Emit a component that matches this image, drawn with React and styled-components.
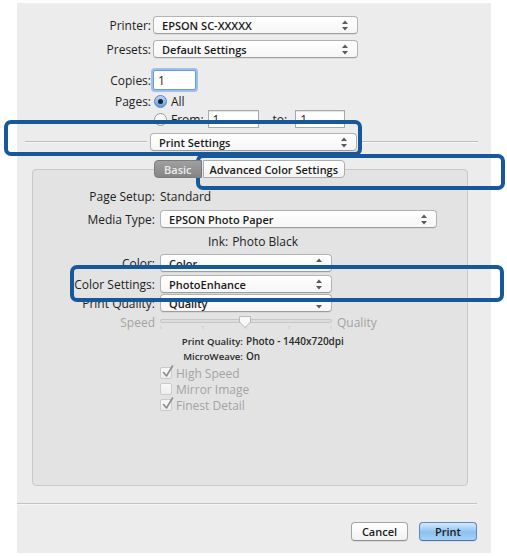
import React from "react";
import styled, { createGlobalStyle } from "styled-components";

const Global = createGlobalStyle`
  html, body { margin: 0; padding: 0; background: #ffffff; }
  body { font-family: "Open Sans", "DejaVu Sans", sans-serif; color: #1c1c1c; }
  * { box-sizing: border-box; }
`;

const Stage = styled.div`
  position: relative;
  width: 507px;
  height: 556px;
  background: #ffffff;
  overflow: hidden;
`;

const Dialog = styled.div`
  margin: 3px 0 0 17px;
  width: 474px;
  height: 550px;
  background: #ececec;
  display: flex;
  flex-direction: column;
`;

const FieldRow = styled.div`
  display: grid;
  grid-template-columns: ${(p) => p.$label}px auto;
  column-gap: ${(p) => p.$gap}px;
  align-items: center;
  height: ${(p) => p.$h}px;
  margin-top: ${(p) => p.$mt}px;
`;

const Label = styled.span`
  justify-self: end;
  white-space: nowrap;
  font-size: 12px;
  color: ${(p) => (p.$disabled ? "#a3a3a3" : "#1e1e1e")};
`;

const Value = styled.span`
  font-size: 12px;
  white-space: nowrap;
  color: #1e1e1e;
`;

const PopupBox = styled.div`
  width: ${(p) => p.$w}px;
  height: 18px;
  border: 1px solid #b3b3b3;
  border-bottom-color: #9d9d9d;
  border-radius: 4px;
  background: linear-gradient(#ffffff, #f6f6f6);
  box-shadow: 0 1px 1px rgba(0, 0, 0, 0.06);
  display: flex;
  align-items: center;
  justify-content: space-between;
  padding: 0 9px 0 8px;
  font-size: 11px;
  font-weight: 600;
  color: #1b1b1b;
  white-space: nowrap;
`;

const Stepper = () => (
  <svg width="6" height="11" viewBox="0 0 6 11">
    <path d="M0 4 L3 0.5 L6 4 Z" fill="#5a5a5a" />
    <path d="M0 7 L3 10.5 L6 7 Z" fill="#5a5a5a" />
  </svg>
);

const Popup = ({ w, children }) => (
  <PopupBox $w={w}>
    <span>{children}</span>
    <Stepper />
  </PopupBox>
);

const TextField = styled.div`
  width: ${(p) => p.$w}px;
  height: ${(p) => p.$h}px;
  background: #ffffff;
  border: 1px solid ${(p) => (p.$focus ? "#6f98cf" : "#a9a9a9")};
  box-shadow: ${(p) => (p.$focus ? "0 0 0 2px #9cc0ec" : "inset 0 1px 1px rgba(0,0,0,0.12)")};
  border-radius: ${(p) => (p.$focus ? "2px" : "0")};
  font-size: 12px;
  padding-left: 4px;
  display: flex;
  align-items: center;
`;

const Radio = styled.span`
  width: 13px;
  height: 13px;
  border-radius: 50%;
  display: inline-flex;
  align-items: center;
  justify-content: center;
  border: 1px solid ${(p) => (p.$on ? "#5b84b8" : "#9b9b9b")};
  background: ${(p) => (p.$on ? "linear-gradient(#b9d6f6, #5d9ce2)" : "linear-gradient(#ffffff, #ececec)")};
  &::after {
    content: "";
    display: ${(p) => (p.$on ? "block" : "none")};
    width: 5px;
    height: 5px;
    border-radius: 50%;
    background: #1b2330;
  }
`;

const Inline = styled.div`
  display: flex;
  align-items: center;
  gap: ${(p) => p.$gap}px;
  font-size: 12px;
`;

const ToLabel = styled.span`
  margin: 0 4px 0 10px;
`;

const SectionBar = styled.div`
  display: flex;
  align-items: center;
  height: 18px;
  margin-top: 7px;
  padding: 0 13px 0 8px;
`;

const Rule = styled.div`
  height: 2px;
  border-top: 1px solid #bdbdbd;
  border-bottom: 1px solid #f8f8f8;
  width: ${(p) => (p.$w ? `${p.$w}px` : "auto")};
  flex: ${(p) => (p.$w ? "none" : "1")};
  margin: 0 ${(p) => p.$mr || 0}px 0 ${(p) => p.$ml || 0}px;
`;

const TabArea = styled.div`
  display: grid;
  grid-template-rows: 9px 9px 308px;
  margin: 9px 0 0 15px;
  width: 436px;
`;

const TabStrip = styled.div`
  grid-row: 1 / 3;
  grid-column: 1;
  z-index: 1;
  display: flex;
  padding-left: 122px;
`;

const Tab = styled.div`
  height: 18px;
  padding: 0 ${(p) => (p.$active ? 9 : 6)}px;
  display: flex;
  align-items: center;
  font-size: 11px;
  font-weight: 600;
  white-space: nowrap;
  border: 1px solid ${(p) => (p.$active ? "#7b7b7b" : "#adadad")};
  border-radius: ${(p) => (p.$active ? "4px 0 0 4px" : "0 4px 4px 0")};
  background: ${(p) => (p.$active ? "linear-gradient(#a0a0a0, #858585)" : "linear-gradient(#ffffff, #f3f3f3)")};
  color: ${(p) => (p.$active ? "#ececec" : "#1b1b1b")};
  margin-left: ${(p) => (p.$active ? 0 : 1)}px;
`;

const GroupBox = styled.div`
  grid-row: 2 / 4;
  grid-column: 1;
  background: #e3e3e3;
  border: 1px solid #c9c9c9;
  border-radius: 4px;
  display: flex;
  flex-direction: column;
  padding-top: 18px;
`;

const CenterRow = styled.div`
  display: flex;
  justify-content: center;
  align-items: center;
  gap: 4px;
  height: 16px;
  margin-top: ${(p) => p.$mt}px;
  padding-left: 6px;
  font-size: 12px;
`;

const Disabled = styled.span`
  font-size: 12px;
  color: #a3a3a3;
  white-space: nowrap;
`;

const SliderWrap = styled.div`
  display: flex;
  align-items: center;
  gap: 5px;
`;

const Slider = () => (
  <svg width="172" height="16" viewBox="0 0 172 16">
    <rect x="0.5" y="4.5" width="171" height="3" rx="1.5" fill="#dddddd" stroke="#c6c6c6" />
    {[1, 43, 86, 129, 171].map((x) => (
      <line key={x} x1={x} y1="11" x2={x} y2="14" stroke="#cdcdcd" strokeWidth="1" />
    ))}
    <path d="M79.5 1.5 H90.5 V7 L85 12.5 L79.5 7 Z" fill="#f7f7f7" stroke="#b9b9b9" />
  </svg>
);

const InfoRow = styled.div`
  display: grid;
  grid-template-columns: 210px auto;
  column-gap: 3px;
  align-items: center;
  height: 14px;
  margin-top: ${(p) => p.$mt}px;
  font-size: 10px;
  font-weight: 600;
  color: #2a2a2a;
  white-space: nowrap;
`;

const InfoKey = styled.span`
  justify-self: end;
  font-size: 9.6px;
`;

const CheckRow = styled.div`
  display: flex;
  align-items: center;
  gap: 4px;
  height: 16px;
  margin: ${(p) => p.$mt}px 0 0 127px;
`;

const CheckBox = styled.span`
  position: relative;
  width: 12px;
  height: 12px;
  border: 1px solid #cbcbcb;
  border-radius: 2px;
  background: linear-gradient(#f8f8f8, #ededed);
  flex: none;
`;

const CheckMark = styled.svg`
  position: absolute;
  left: 1px;
  top: -3px;
`;

const Check = ({ on }) => (
  <CheckBox>
    {on && (
      <CheckMark width="12" height="13" viewBox="0 0 12 13">
        <path d="M1.5 7.5 L4.5 11 L10.5 1" fill="none" stroke="#8d8d8d" strokeWidth="1.6" strokeLinecap="round" strokeLinejoin="round" />
      </CheckMark>
    )}
  </CheckBox>
);

const BottomRule = styled.div`
  margin: 17px 14px 0 0;
  height: 2px;
  border-top: 1px solid #c4c4c4;
  border-bottom: 1px solid #f7f7f7;
`;

const ButtonBar = styled.div`
  display: flex;
  justify-content: flex-end;
  gap: 11px;
  margin-top: 17px;
  padding-right: 14px;
`;

const Button = styled.div`
  width: ${(p) => p.$w}px;
  height: 19px;
  border-radius: 4px;
  border: 1px solid ${(p) => (p.$primary ? "#5f87bb" : "#a4a4a4")};
  border-bottom-color: ${(p) => (p.$primary ? "#4d72a3" : "#8f8f8f")};
  background: ${(p) => (p.$primary ? "linear-gradient(#d3e8fb, #8cc1f1 55%, #a6d1f7)" : "linear-gradient(#ffffff, #f1f1f1)")};
  box-shadow: 0 1px 1px rgba(0, 0, 0, 0.08);
  display: flex;
  align-items: center;
  justify-content: center;
  font-size: 11px;
  font-weight: 600;
  color: #1d1d1d;
`;

const Highlight = styled.div`
  position: absolute;
  left: ${(p) => p.$x}px;
  top: ${(p) => p.$y}px;
  width: ${(p) => p.$w}px;
  height: ${(p) => p.$h}px;
  border: 4px solid #17589b;
  border-radius: 7px;
  pointer-events: none;
`;

export default function App() {
  return (
    <Stage>
      <Global />
      <Dialog>
        <FieldRow $label={134} $gap={2} $h={18} $mt={13}>
          <Label>Printer:</Label>
          <Popup w={205}>EPSON SC-XXXXX</Popup>
        </FieldRow>
        <FieldRow $label={134} $gap={2} $h={18} $mt={6}>
          <Label>Presets:</Label>
          <Popup w={205}>Default Settings</Popup>
        </FieldRow>
        <FieldRow $label={134} $gap={2} $h={20} $mt={12}>
          <Label>Copies:</Label>
          <TextField $w={43} $h={20} $focus>1</TextField>
        </FieldRow>
        <FieldRow $label={134} $gap={3} $h={16} $mt={3}>
          <Label>Pages:</Label>
          <Inline $gap={4}>
            <Radio $on />
            <span>All</span>
          </Inline>
        </FieldRow>
        <FieldRow $label={134} $gap={3} $h={16} $mt={1}>
          <span />
          <Inline $gap={4}>
            <Radio />
            <span>From:</span>
            <TextField $w={51} $h={18}>1</TextField>
            <ToLabel>to:</ToLabel>
            <TextField $w={50} $h={18}>1</TextField>
          </Inline>
        </FieldRow>

        <SectionBar>
          <Rule $w={122} $mr={3} />
          <Popup w={207}>Print Settings</Popup>
          <Rule $ml={5} />
        </SectionBar>

        <TabArea>
          <TabStrip>
            <Tab $active>Basic</Tab>
            <Tab>Advanced Color Settings</Tab>
          </TabStrip>
          <GroupBox>
            <FieldRow $label={122} $gap={5} $h={16} $mt={0}>
              <Label>Page Setup:</Label>
              <Value>Standard</Value>
            </FieldRow>
            <FieldRow $label={122} $gap={5} $h={18} $mt={6}>
              <Label>Media Type:</Label>
              <Popup w={277}>EPSON Photo Paper</Popup>
            </FieldRow>
            <CenterRow $mt={5}>
              <Value>Ink:</Value>
              <Value>Photo Black</Value>
            </CenterRow>
            <FieldRow $label={122} $gap={5} $h={18} $mt={5}>
              <Label>Color:</Label>
              <Popup w={172}>Color</Popup>
            </FieldRow>
            <FieldRow $label={122} $gap={5} $h={18} $mt={3}>
              <Label>Color Settings:</Label>
              <Popup w={172}>PhotoEnhance</Popup>
            </FieldRow>
            <FieldRow $label={122} $gap={5} $h={18} $mt={1}>
              <Label>Print Quality:</Label>
              <Popup w={172}>Quality</Popup>
            </FieldRow>
            <FieldRow $label={122} $gap={5} $h={16} $mt={2}>
              <Label $disabled>Speed</Label>
              <SliderWrap>
                <Slider />
                <Disabled>Quality</Disabled>
              </SliderWrap>
            </FieldRow>
            <InfoRow $mt={4}>
              <InfoKey>Print Quality:</InfoKey>
              <span>Photo - 1440x720dpi</span>
            </InfoRow>
            <InfoRow $mt={1}>
              <InfoKey>MicroWeave:</InfoKey>
              <span>On</span>
            </InfoRow>
            <CheckRow $mt={2}>
              <Check on />
              <Disabled>High Speed</Disabled>
            </CheckRow>
            <CheckRow $mt={0}>
              <Check />
              <Disabled>Mirror Image</Disabled>
            </CheckRow>
            <CheckRow $mt={0}>
              <Check on />
              <Disabled>Finest Detail</Disabled>
            </CheckRow>
          </GroupBox>
        </TabArea>

        <BottomRule />
        <ButtonBar>
          <Button $w={57}>Cancel</Button>
          <Button $w={58} $primary>Print</Button>
        </ButtonBar>
      </Dialog>

      <Highlight $x={4} $y={120} $w={358} $h={36} />
      <Highlight $x={196} $y={154} $w={309} $h={36} />
      <Highlight $x={70} $y={265} $w={434} $h={37} />
    </Stage>
  );
}
